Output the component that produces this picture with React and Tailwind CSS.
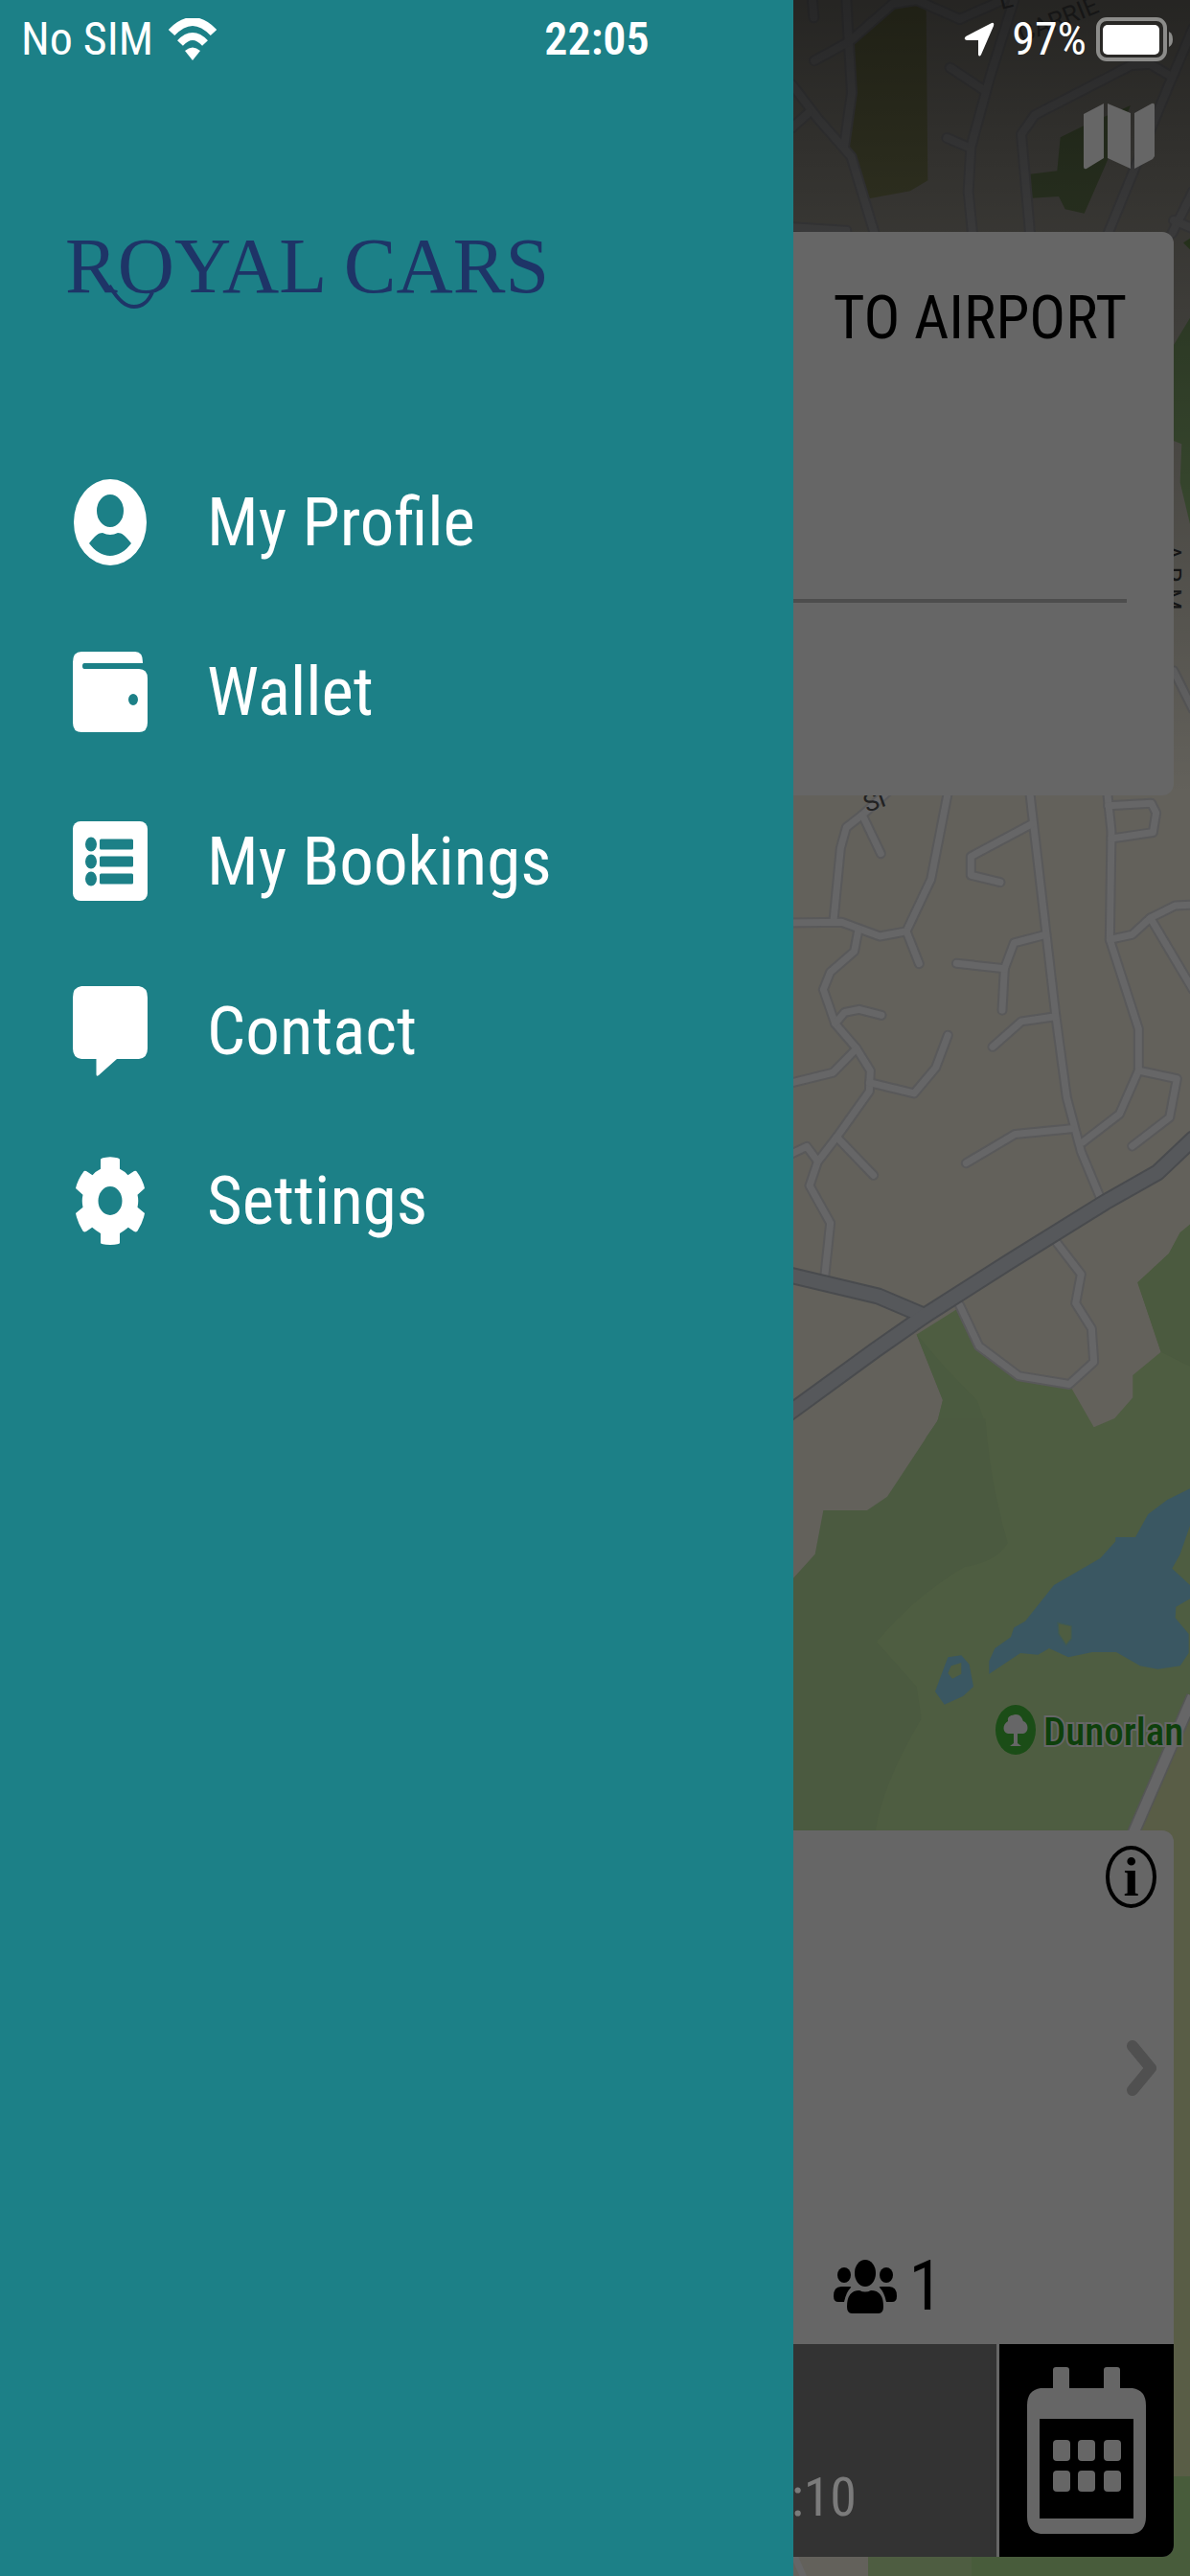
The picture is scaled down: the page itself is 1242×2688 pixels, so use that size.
import React from "react";

const roadsTop = [
  "M84 0 L88 55",
  "M190 0 L207 290 L183 460",
  "M90 190 L200 130 L335 12 L410 0 L545 60 L680 0",
  "M20 265 L100 370 L205 490 L278 730",
  "M20 400 L75 350",
  "M515 212 L625 285",
  "M505 432 L570 460",
  "M715 0 L640 240 L580 460 L572 600 L585 730",
  "M765 730 L738 420 L780 360 L1080 205 L1140 200 L1200 235",
  "M1275 90 L1190 290 L1010 730",
  "M1275 600 L1210 730",
  "M0 710 L190 722",
  "M1215 690 L1275 715",
];

const roadsMiddle = [
  "M340 0 L240 70 L190 100 L172 150 L150 325",
  "M240 70 L298 163",
  "M0 330 L175 328 L295 362 L378 350 L455 225 L512 0",
  "M378 350 L418 428",
  "M228 345 L215 398 L140 448 L118 490 L155 572 L222 632 L265 685 L262 735 L160 845 L100 905 L75 962 L140 1052 L122 1182",
  "M155 572 L185 545 L230 538 L300 552",
  "M222 632 L148 690 L0 718",
  "M262 714 L402 740 L470 678 L508 600",
  "M160 845 L275 937",
  "M0 892 L66 868 L100 903",
  "M762 0 L815 350 L845 550 L880 750 L925 880 L990 1000",
  "M770 92 L580 170 L580 215 L672 232",
  "M815 358 L715 378 L685 440 L678 540",
  "M685 440 L535 427",
  "M845 555 L738 567 L648 628",
  "M895 825 L718 838 L565 908",
  "M1005 0 L1020 110 L1015 370 L1105 585 L1105 685 L1045 790 L930 858",
  "M1010 48 L1145 42 L1160 65 L1150 112 L1020 127",
  "M1015 370 L1085 358 L1142 318 L1220 288 L1275 286",
  "M1142 318 L1275 490",
  "M1105 685 L1225 705 L1202 798 L1085 867",
  "M545 1250 L605 1348 L730 1420 L888 1440 L965 1386 L958 1306 L908 1245 L925 1175 L850 1100",
];

const mainRoads = [
  "M0 1175 L290 1228 L435 1275",
  "M0 1515 L280 1358 L435 1275 L700 1145 L1000 1002 L1165 930 L1275 850",
];

function Roads({ paths, transform, edge, fill, edgeClass, fillClass }) {
  return (
    <g transform={transform} fill="none" strokeLinecap="round" strokeLinejoin="round">
      {paths.map((d) => (
        <path key={"e" + d} d={d} stroke={edge} className={edgeClass} vectorEffect="non-scaling-stroke" />
      ))}
      {paths.map((d) => (
        <path key={"f" + d} d={d} stroke={fill} className={fillClass} vectorEffect="non-scaling-stroke" />
      ))}
    </g>
  );
}

const upper = "scale(0.33333)";
const middle = "translate(0 820) scale(0.33333 0.43367)";

function MapBackdrop() {
  return (
    <svg
      className="absolute inset-y-0 right-0 h-full w-[422px]"
      viewBox="0 0 422 2688"
      preserveAspectRatio="xMaxYMin slice"
      aria-hidden="true"
    >
      <defs>
        <linearGradient id="shade" x1="0" y1="0" x2="0" y2="1">
          <stop offset="0" stopColor="#000" stopOpacity="0.62" />
          <stop offset="1" stopColor="#000" stopOpacity="0" />
        </linearGradient>
      </defs>
      <rect width="422" height="2688" fill="#63615b" />

      <g transform={upper}>
        <path d="M330 20 Q390 0 440 30 L445 565 L390 598 L260 622 L190 460 L215 120Z" fill="#525438" />
        <path d="M860 430 L930 395 L1080 330 L1000 520 L935 668 L875 655 L855 615 L770 620 L765 545 L850 535Z" fill="#455336" />
        <path d="M1275 740 L1245 760 L1275 790Z" fill="#41552f" />
        <path d="M1275 980 L1215 1080 L1215 1380 L1240 1390 L1235 1510 L1266 1640Z" fill="#465a3a" />
      </g>
      <Roads paths={roadsTop} transform={upper} edge="#5a5a5c" fill="#666667" edgeClass="stroke-[12px]" fillClass="stroke-[8px]" />

      <g transform={middle}>
        <path
          d="M410 1320 L545 1255 L605 1348 L730 1420 L888 1440 L965 1543 L1030 1522 L1087 1472 V1418 L1175 1362 L1102 1195 L1200 1125 L1235 1075 L1275 1050 V2600 H0 V2040 L24 2020 L95 1945 L120 1805 H255 L318 1765 L440 1568 L475 1530 L492 1478Z"
          fill="#4e5d41"
        />
        <path d="M1275 1050 L1235 1075 L1200 1125 L1102 1195 L1175 1362 L1275 1400Z" fill="#4b5a3f" />
        <path d="M410 1320 L492 1478 L475 1530 L440 1568 L625 1535 L600 1480 L500 1400Z" fill="#4b5b40" />
      </g>
      <g transform="translate(0 1480) scale(0.33333)">
        <path d="M480 0 H625 Q640 200 695 390 Q660 450 560 465 Q400 560 285 700 L410 840 L425 940 Q300 1150 280 1300 H24 V500 L92 425 L118 288 H255 L318 245Z" fill="#4b5a40" />
        <path
          d="M1275 215 L1195 255 L1135 300 L1095 372 H1033 V385 L985 438 L840 522 L750 635 L715 655 L705 685 L655 720 L637 760 V800 L735 735 L790 740 L825 720 L885 748 L960 732 H1035 L1110 775 L1165 785 L1235 775 L1262 735 L1262 675 L1220 625 L1222 590 L1275 560 V530 L1210 470 L1235 425 L1275 310Z"
          fill="#3a5762"
        />
        <path d="M852 640 L895 650 V690 L878 710 L855 675Z" fill="#4e5d41" stroke="#3f5a55" strokeWidth="4" />
        <path d="M508 748 L550 742 L575 770 L588 840 L555 870 L497 896 L468 855Z" fill="#3a5762" />
        <path d="M518 775 L550 765 V800 L522 815 L508 798Z" fill="#4e5d41" />
        <path d="M1275 860 L1090 1300 H1275Z" fill="#595d46" />
        <path d="M1275 870 L1088 1300" stroke="#555656" strokeWidth="42" />
        <path d="M1275 870 L1088 1300" stroke="#666667" strokeWidth="32" />
      </g>
      <rect x="400" y="1910" width="22" height="674" fill="#595d46" />
      <rect x="400" y="2584" width="22" height="104" fill="#485c3b" />
      <rect x="0" y="2660" width="86" height="28" fill="#63615b" />
      <rect x="86" y="2660" width="108" height="28" fill="#4e5d41" />
      <rect x="194" y="2660" width="228" height="28" fill="#485c3b" />
      <path d="M6 2660 L20 2692" stroke="#666667" strokeWidth="7" />

      <Roads paths={roadsMiddle} transform={middle} edge="#59595a" fill="#666667" edgeClass="stroke-[11px]" fillClass="stroke-[7px]" />
      <Roads paths={mainRoads} transform={middle} edge="#494b4e" fill="#56585b" edgeClass="stroke-[18px]" fillClass="stroke-[14px]" />
      <Roads paths={["M1215 900 L1275 1020"]} transform="translate(0 400) scale(0.33333)" edge="#59595a" fill="#666667" edgeClass="stroke-[11px]" fillClass="stroke-[7px]" />

      <rect width="422" height="830" fill="url(#shade)" />
      <g fontFamily="Roboto, sans-serif" fontSize="26" fill="#161616">
        <text transform="translate(225 10) rotate(-14)">L</text>
        <text transform="translate(247 45) rotate(-22)">CARRIE</text>
        <text transform="translate(85 848) rotate(-20)" fill="#222222">SI</text>
        <text transform="translate(394 568) rotate(90)">A R M</text>
      </g>

      <g>
        <ellipse cx="240" cy="1805" rx="21" ry="26" fill="#1b4d17" />
        <path
          d="M240 1789 C246 1789 247 1794 248 1796 C254 1798 254 1808 248 1809 H242 V1819 L246 1822 H234 L238 1819 V1809 H232 C226 1808 226 1799 232 1796 C231 1790 236 1790 240 1789Z"
          fill="#666667"
        />
        <text
          x="269"
          y="1821"
          fontFamily="Roboto Condensed, Roboto, sans-serif"
          fontSize="41"
          fontWeight="500"
          fill="#0e400c"
          stroke="#666667"
          strokeWidth="4"
          paintOrder="stroke"
        >
          Dunorlan
        </text>
      </g>
    </svg>
  );
}

const iconBox = "h-24 w-20 shrink-0";

const ProfileIcon = () => (
  <svg viewBox="0 0 80 96" className={iconBox} fill="currentColor" fillRule="evenodd" aria-hidden="true">
    <path d="M2 48a38 45 0 1 0 76 0a38 45 0 1 0 -76 0Z M26 36a14 17 0 1 0 28 0a14 17 0 1 0 -28 0Z M18 70C24 62 28 59 32 59Q36 61 40 61Q44 61 48 59C52 59 56 62 62 70C56 78 48 83 40 83S24 78 18 70Z" />
  </svg>
);
const WalletIcon = () => (
  <svg viewBox="0 0 80 96" className={iconBox} fill="currentColor" fillRule="evenodd" aria-hidden="true">
    <path d="M1 17Q1 6 10 6H66Q74 6 74 17V18H13Q11 18 11 21Q11 24 13 24H70Q79 24 79 34V80Q79 90 70 90H10Q1 90 1 80Z M59 56a5 6 0 1 0 10 0a5 6 0 1 0 -10 0Z" />
  </svg>
);
const BookingsIcon = () => (
  <svg viewBox="0 0 80 96" className={iconBox} aria-hidden="true">
    <rect x="1" y="6" width="78" height="83" rx="8" fill="currentColor" />
    <g fill="#1c8087">
      {[30, 48, 66].map((y) => (
        <g key={y}>
          <ellipse cx="20" cy={y} rx="6" ry="7.5" />
          <rect x="29" y={y - 5.5} width="35" height="11" rx="1.5" />
        </g>
      ))}
    </g>
  </svg>
);
const ContactIcon = () => (
  <svg viewBox="0 0 80 96" className={iconBox} fill="currentColor" aria-hidden="true">
    <path d="M10 1H70Q79 2 79 13V66Q79 76 70 77H47L28 94Q25.500 96 25.500 93V77H10Q1 76 1 66V13Q1 2 10 1Z" />
  </svg>
);
const SettingsIcon = () => (
  <svg viewBox="0 0 80 96" className={iconBox} fill="currentColor" fillRule="evenodd" aria-hidden="true">
    <path d="M30 5Q30 3 40 2.300Q50 3 50 5V14.700Q55 17 58.500 21.300L65 17Q67 16 68 18Q74 26 76 35L68.500 41.700Q70 48 68.500 54.700L76 61Q74 71 68.500 79.500Q67 81 65 80L58.800 75.700Q55 79 50 82V92Q50 93.500 40 94Q30 93.500 30 92V82Q25 79 21.200 75.700L15 80Q13 81 11.500 79.500Q6 71 4 61L11.500 54.700Q10 48 11.500 41.700L4 35Q6 26 12 18Q13 16 15 17L21.500 21.300Q25 17 30 14.700Z M27.500 48a12.500 15 0 1 0 25 0a12.500 15 0 1 0 -25 0Z" />
  </svg>
);

const menu = [
  ["My Profile", ProfileIcon],
  ["Wallet", WalletIcon],
  ["My Bookings", BookingsIcon],
  ["Contact", ContactIcon],
  ["Settings", SettingsIcon],
];

function StatusBar() {
  return (
    <div className="absolute inset-x-0 top-0 z-20 grid h-[82px] grid-cols-3 items-center pr-[18px] pl-[22px] text-[48px] leading-none text-white">
      <div className="flex items-center gap-4">
        <span>No SIM</span>
        <svg viewBox="0 0 50 44" className="h-11 w-[50px]" fill="none" stroke="currentColor" aria-hidden="true">
          <path d="M3 15Q25 -8 47 15" strokeWidth="9" />
          <path d="M12 26Q25 12 38 26" strokeWidth="8" />
          <path d="M17 34Q25 27 33 34L25 44Z" fill="currentColor" stroke="none" />
        </svg>
      </div>
      <span className="text-center font-semibold">22:05</span>
      <div className="flex items-center justify-end gap-[10px]">
        <svg viewBox="0 0 32 36" className="mr-2 h-9 w-8" fill="currentColor" aria-hidden="true">
          <path d="M29 1Q32 0 31 4L18 34Q16 37 15 34V19H3Q-1 18 2 15Z" />
        </svg>
        <span>97%</span>
        <svg viewBox="0 0 80 46" className="h-[46px] w-20" aria-hidden="true">
          <rect x="2" y="2" width="70" height="42" rx="9" fill="none" stroke="#8c8c8a" strokeWidth="4" />
          <rect x="7" y="8" width="59" height="31" rx="5" fill="#fff" />
          <path d="M76 15Q80 17 80 23T76 31Z" fill="#8c8c8a" />
        </svg>
      </div>
    </div>
  );
}

function Drawer() {
  return (
    <aside className="absolute inset-y-0 left-0 z-10 w-2/3 bg-[#1c8087] pt-[230px] text-white">
      <div className="relative ml-[68px] inline-block font-['Liberation_Serif',serif] text-[82px] leading-[96px] whitespace-nowrap text-[#1e3467]">
        ROYAL CARS
        <svg viewBox="0 0 90 40" className="absolute top-[62px] left-[42px] h-10 w-[90px]" fill="none" stroke="currentColor" aria-hidden="true">
          <path d="M4 6C14 22 21 28 30 28C40 28 45 22 49 13" strokeWidth="4" />
        </svg>
      </div>
      <nav className="mt-[130px]">
        <ul>
          {menu.map(([label, Icon]) => (
            <li key={label}>
              <a href="#" className="flex h-[177px] items-center gap-[61px] pl-[75px] text-[71px] leading-none">
                <Icon />
                {label}
              </a>
            </li>
          ))}
        </ul>
      </nav>
    </aside>
  );
}

export default function App() {
  return (
    <div className="relative min-h-screen overflow-hidden bg-[#63615b] font-['Roboto_Condensed',Roboto,sans-serif]">
      <MapBackdrop />
      <StatusBar />
      <Drawer />
      <main className="relative flex min-h-screen flex-col px-[17px] pb-5">
        <header className="flex h-[242px] justify-end pt-[107px] pr-5">
          <button aria-label="Map" className="h-[70px] w-[74px] text-[#666666]">
            <svg viewBox="0 0 74 70" className="h-full w-full" fill="currentColor" aria-hidden="true">
              <path d="M0 12L21 1V58L3 69Q0 70 0 67Z M25 1L49 11V69L25 58Z M53 11L71 1Q74 0 74 3V56L72 59L53 69Z" />
            </svg>
          </button>
        </header>

        <section className="h-[588px] rounded-xl bg-[#666666] px-[49px] pt-[60px] text-black">
          <div className="flex justify-end">
            <button className="text-[63px] leading-[60px]">TO AIRPORT</button>
          </div>
          <hr className="mt-[263px] border-t-4 border-[#4d4d4d]" />
        </section>

        <section className="mt-auto flex flex-col overflow-hidden rounded-xl bg-[#666666] text-black">
          <div className="flex h-[536px] flex-col items-end pt-4 pr-[18px]">
            <button
              aria-label="Information"
              className="flex h-[65px] w-[53px] items-center justify-center rounded-[50%] border-4 border-black font-['Liberation_Serif',serif] text-[58px] leading-none font-bold"
            >
              i
            </button>
            <button aria-label="Next" className="mt-[136px] h-[62px] w-8 text-[#505050]">
              <svg viewBox="0 0 32 62" className="h-full w-full" fill="none" stroke="currentColor" strokeWidth="12" strokeLinecap="round" strokeLinejoin="round" aria-hidden="true">
                <path d="M7 8L26 31L7 54" />
              </svg>
            </button>
            <div className="mt-auto mr-[223px] mb-6 flex items-center gap-3 text-[72px] leading-none">
              <svg viewBox="0 0 66 56" className="h-14 w-[66px]" fill="currentColor" role="img" aria-label="Passengers">
                <ellipse cx="33" cy="14" rx="11" ry="14" />
                <ellipse cx="11" cy="16" rx="7" ry="8" />
                <ellipse cx="55" cy="16" rx="7" ry="8" />
                <path d="M14 49Q14 32 27 32Q33 35 39 32Q52 32 52 49Q52 56 47 56H19Q14 56 14 49Z" />
                <path d="M5 44Q0 44 0 38Q0 28 8 28H16Q19 28 18 29Q13 34 11 44Z M61 44Q66 44 66 38Q66 28 58 28H50Q47 28 48 29Q53 34 55 44Z" />
              </svg>
              <span>1</span>
            </div>
          </div>
          <div className="flex h-[222px] gap-[3px]">
            <div className="flex flex-1 items-end justify-end bg-[#333333] pr-[146px] pb-[34px] text-[56px] leading-none text-[#7b7b7b]">
              :10
            </div>
            <button aria-label="Choose date" className="flex w-[182px] items-center justify-center bg-black text-[#666666]">
              <svg viewBox="0 0 124 174" className="h-[174px] w-[124px]" fill="currentColor" fillRule="evenodd" aria-hidden="true">
                <path d="M27 3Q27 0 30 0H41Q44 0 44 3V22H80V3Q80 0 83 0H94Q97 0 97 3V22H110Q124 24 124 40V156Q124 172 110 174H14Q0 172 0 156V40Q0 24 14 22H27Z M13 54V158H111V54Z" />
                {[76, 108].map((y) =>
                  [27, 53, 80].map((x) => <rect key={`${x}-${y}`} x={x} y={y} width="18" height="22" rx="4" />)
                )}
              </svg>
            </button>
          </div>
        </section>
      </main>
    </div>
  );
}
